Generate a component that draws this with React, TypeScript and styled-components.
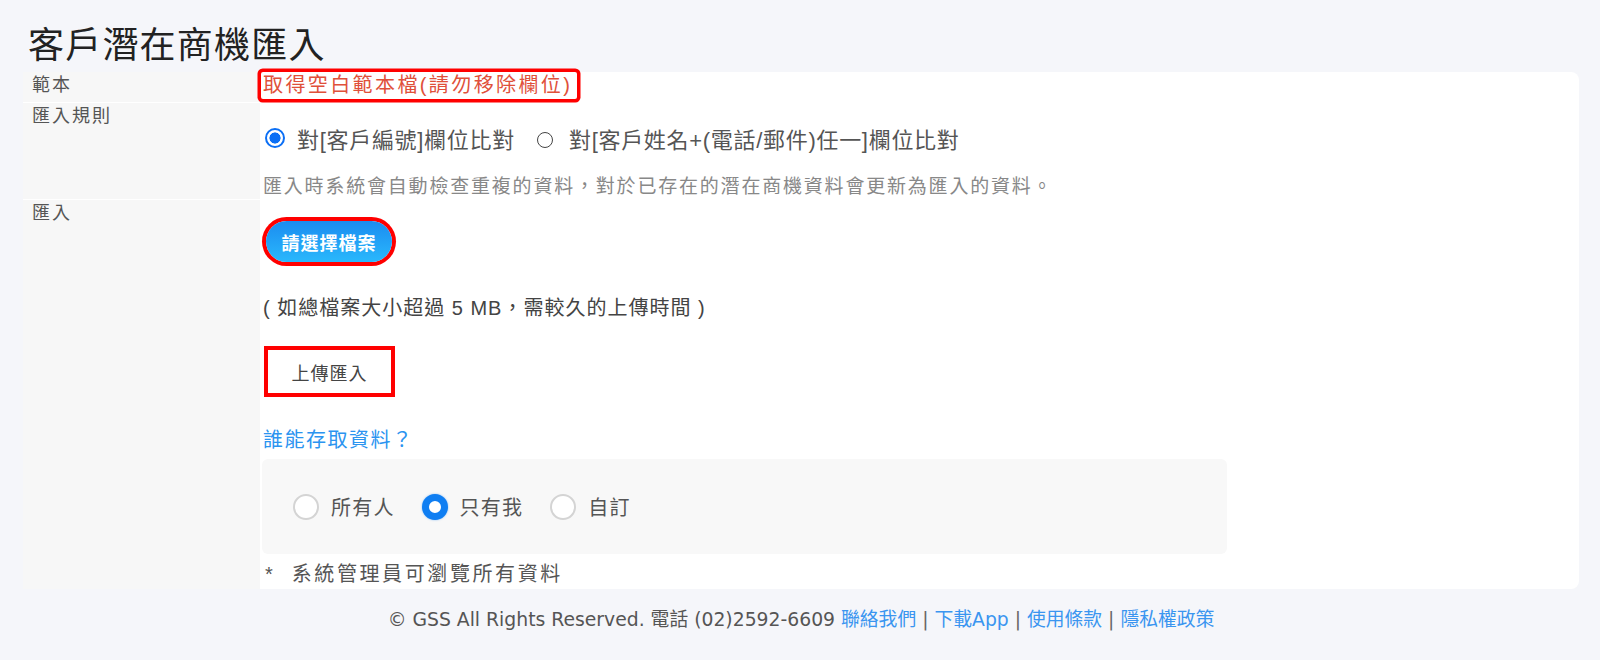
import React from 'react';
import styled, { createGlobalStyle } from 'styled-components';

const GlobalStyle = createGlobalStyle`
  html, body {
    margin: 0;
    padding: 0;
    background: #f5f6fa;
  }
  body {
    font-family: "Liberation Sans", "Noto Sans CJK TC", sans-serif;
    color: #333;
  }
`;

const accessOptions = [
  { label: '所有人', checked: false },
  { label: '只有我', checked: true },
  { label: '自訂', checked: false },
];

const footerLinks = ['聯絡我們', '下載App', '使用條款', '隱私權政策'];

const App: React.FC = () => {
  return (
    <Page>
      <GlobalStyle />
      <Title>客戶潛在商機匯入</Title>
      <Form>
        <Label>範本</Label>
        <TemplateCell>
          <TemplateLink href="#">取得空白範本檔(請勿移除欄位)</TemplateLink>
        </TemplateCell>

        <Label $divider>匯入規則</Label>
        <RuleCell>
          <RuleOptions>
            <RuleOption>
              <BigRadio />
              對[客戶編號]欄位比對
            </RuleOption>
            <RuleOption>
              <SmallRadio />
              對[客戶姓名+(電話/郵件)任一]欄位比對
            </RuleOption>
          </RuleOptions>
          <Hint>
            匯入時系統會自動檢查重複的資料，對於已存在的潛在商機資料會更新為匯入的資料。
          </Hint>
        </RuleCell>

        <Label $divider>匯入</Label>
        <ImportCell>
          <FileButton type="button">請選擇檔案</FileButton>
          <SizeNote>( 如總檔案大小超過 5 MB，需較久的上傳時間 )</SizeNote>
          <UploadButton type="button">上傳匯入</UploadButton>
          <AccessLink href="#">誰能存取資料？</AccessLink>
          <AccessPanel>
            {accessOptions.map((opt) => (
              <AccessOption key={opt.label}>
                <PanelRadio $checked={opt.checked} />
                {opt.label}
              </AccessOption>
            ))}
          </AccessPanel>
          <Footnote>*{'\u00a0\u00a0'}系統管理員可瀏覽所有資料</Footnote>
        </ImportCell>
      </Form>
      <Footer>
        © GSS All Rights Reserved. 電話 (02)2592-6609{' '}
        {footerLinks.map((link, i) => (
          <React.Fragment key={link}>
            {i > 0 && <Sep> | </Sep>}
            <FooterLink href="#">{link}</FooterLink>
          </React.Fragment>
        ))}
      </Footer>
    </Page>
  );
};

const Page = styled.div`
  padding: 22px 21px 0 23px;
  min-height: 638px;
`;

const Title = styled.h1`
  margin: 0 0 2px 5px;
  font-size: 36px;
  line-height: 48px;
  font-weight: 400;
  letter-spacing: 1.2px;
  color: #222;
`;

const Form = styled.div`
  display: grid;
  grid-template-columns: 237px 1fr;
  background: #fff;
  border-radius: 0 8px 8px 0;
`;

const Label = styled.div<{ $divider?: boolean }>`
  background: #f7f7f7;
  border-top: ${(p) => (p.$divider ? '1px solid #fff' : 'none')};
  padding: 0 9px;
  font-size: 18px;
  line-height: 26px;
  letter-spacing: 2px;
  color: #555;
`;

const TemplateCell = styled.div`
  padding: 0 0 3px 1px;
`;

const TemplateLink = styled.a`
  display: inline-block;
  padding: 0 5px 0 2px;
  font-size: 20px;
  line-height: 27px;
  letter-spacing: 2.4px;
  color: #e0503a;
  text-decoration: none;
  border-radius: 2px;
  box-shadow: 0 0 0 3.5px #ff0000;
`;

const RuleCell = styled.div`
  padding: 21px 0 0 3px;
`;

const RuleOptions = styled.div`
  display: flex;
  align-items: center;
  gap: 22px;
  height: 30px;
  margin-left: 2px;
`;

const RuleOption = styled.label`
  display: flex;
  align-items: center;
  font-size: 22px;
  letter-spacing: 0.7px;
  color: #555;
`;

const BigRadio = styled.span`
  box-sizing: border-box;
  width: 20px;
  height: 20px;
  margin-right: 12px;
  border-radius: 50%;
  border: 2.5px solid #0b6ff5;
  background: radial-gradient(circle, #0b6ff5 0 5.3px, #fff 5.8px);
`;

const SmallRadio = styled.span`
  box-sizing: border-box;
  width: 16px;
  height: 16px;
  margin: 3px 16px 0 0;
  border-radius: 50%;
  border: 1.5px solid #444;
`;

const Hint = styled.div`
  margin-top: 22px;
  font-size: 19px;
  line-height: 24px;
  letter-spacing: 1.8px;
  color: #888;
`;

const ImportCell = styled.div`
  display: flex;
  flex-direction: column;
  align-items: flex-start;
  padding: 22px 0 3px 3px;
`;

const FileButton = styled.button`
  width: 126px;
  height: 41px;
  margin-left: 3px;
  border: none;
  border-radius: 21px;
  background: linear-gradient(180deg, #1b8cf0 0%, #2ab8fc 100%);
  color: #fff;
  font-family: inherit;
  font-size: 18px;
  font-weight: 700;
  letter-spacing: 1px;
  box-shadow: 0 0 0 4px #ff0000;
  cursor: pointer;
`;

const SizeNote = styled.div`
  margin-top: 32px;
  font-size: 20px;
  line-height: 28px;
  letter-spacing: 1px;
  color: #444;
`;

const UploadButton = styled.button`
  box-sizing: border-box;
  width: 131px;
  height: 51px;
  margin: 24px 0 0 1px;
  border: 4px solid #ff0000;
  background: #fff;
  font-family: inherit;
  font-size: 18px;
  letter-spacing: 1px;
  color: #444;
  cursor: pointer;
`;

const AccessLink = styled.a`
  margin-top: 29px;
  font-size: 20px;
  line-height: 28px;
  letter-spacing: 1.5px;
  color: #2b94f0;
  text-decoration: none;
`;

const AccessPanel = styled.div`
  box-sizing: border-box;
  display: flex;
  align-items: center;
  gap: 27px;
  width: 965px;
  height: 95px;
  margin: 5px 0 0 -1px;
  padding-left: 31px;
  background: #f8f8f8;
  border-radius: 6px;
`;

const AccessOption = styled.label`
  display: flex;
  align-items: center;
  gap: 12px;
  font-size: 20px;
  letter-spacing: 1.2px;
  color: #555;
`;

const PanelRadio = styled.span<{ $checked?: boolean }>`
  box-sizing: border-box;
  width: 26px;
  height: 26px;
  border-radius: 50%;
  background: #fff;
  border: ${(p) => (p.$checked ? '7px solid #0f7ef2' : '2px solid #d4d4d4')};
  box-shadow: ${(p) => (p.$checked ? '0 0 2px rgba(15, 126, 242, 0.5)' : 'none')};
`;

const Footnote = styled.div`
  margin: 8px 0 0 2px;
  font-size: 20px;
  line-height: 24px;
  letter-spacing: 2.6px;
  color: #555;
`;

const Footer = styled.div`
  margin-top: 19px;
  text-align: center;
  font-family: "DejaVu Sans", "Noto Sans CJK TC", sans-serif;
  font-size: 18.8px;
  line-height: 24px;
  color: #555;
`;

const FooterLink = styled.a`
  color: #3a95f0;
  text-decoration: none;
`;

const Sep = styled.span`
  color: #666;
`;

export default App;
